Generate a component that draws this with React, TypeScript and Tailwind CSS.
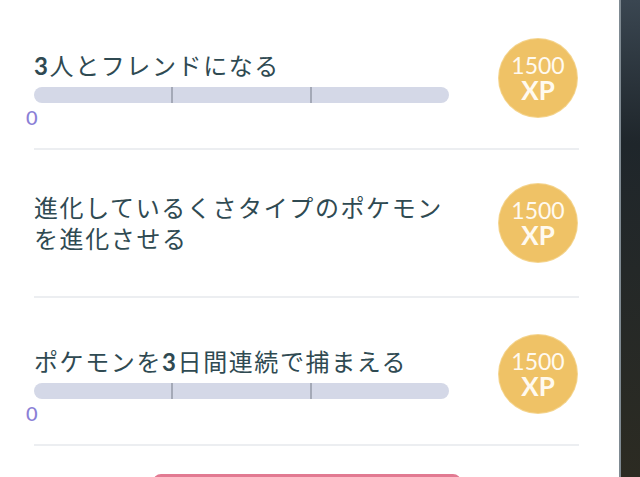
import React from 'react';

type Quest = {
  id: number;
  lines: React.ReactNode[];
  hasProgress: boolean;
  xp: number;
};

const quests: Quest[] = [
  {
    id: 1,
    lines: [<><span className="font-bold">3</span>人とフレンドになる</>],
    hasProgress: true,
    xp: 1500,
  },
  {
    id: 2,
    lines: ['進化しているくさタイプのポケモン', 'を進化させる'],
    hasProgress: false,
    xp: 1500,
  },
  {
    id: 3,
    lines: [<>ポケモンを<span className="font-bold">3</span>日間連続で捕まえる</>],
    hasProgress: true,
    xp: 1500,
  },
];

const XpBadge: React.FC<{ xp: number; className?: string }> = ({ xp, className = '' }) => (
  <div
    className={`flex h-[78px] w-[78px] shrink-0 flex-col items-center justify-center rounded-full bg-[#efc266] text-[#fffaf0] ring-1 ring-[#f4d48e] ${className}`}
  >
    <span className="text-[23px] leading-none">{xp}</span>
    <span className="text-[26px] font-bold leading-none">XP</span>
  </div>
);

const ProgressBar: React.FC = () => (
  <div className="mt-[6px] flex h-4 w-[415px] overflow-hidden rounded-full bg-[#d4d8e7]">
    <div className="flex-1" />
    <div className="w-[2px] bg-[#a4a9b7]" />
    <div className="flex-1" />
    <div className="w-[2px] bg-[#a4a9b7]" />
    <div className="flex-1" />
  </div>
);

const App: React.FC = () => {
  return (
    <div className="flex h-[477px] w-[640px] overflow-hidden bg-white font-['Lato','Noto_Sans_CJK_JP',sans-serif]">
      <div className="w-[619px] pt-[2px]">
        <ul className="ml-[34px] w-[545px]">
          {quests.map((quest) => (
            <li
              key={quest.id}
              className={
                quest.hasProgress
                  ? 'flex h-[148px] items-start justify-between border-b-2 border-[#eceef1] pt-[48px]'
                  : 'flex h-[148px] items-center justify-between border-b-2 border-[#eceef1]'
              }
            >
              <div className="flex flex-col">
                <div className="text-[24px] leading-[31px] tracking-[1.6px] text-[#2f4a52]">
                  {quest.lines.map((line, i) => (
                    <div key={i}>{line}</div>
                  ))}
                </div>
                {quest.hasProgress && (
                  <>
                    <ProgressBar />
                    <div className="-ml-[8px] mt-[4px] text-[20px] font-medium leading-none text-[#8b80d6]">0</div>
                  </>
                )}
              </div>
              <XpBadge xp={quest.xp} className={quest.hasProgress ? 'mr-[2px] -mt-[11px]' : 'mr-[2px]'} />
            </li>
          ))}
        </ul>
        <div className="ml-[34px] mt-[28px] flex w-[545px] justify-center">
          <div className="h-[48px] w-[308px] rounded-[8px] bg-[#e27a92]" />
        </div>
      </div>
      <div className="flex-1 border-l-2 border-[#7f8a92] bg-linear-to-b from-[#3a4651] via-[#1f262b] via-30% to-[#2c2b22]" />
    </div>
  );
};

export default App;
